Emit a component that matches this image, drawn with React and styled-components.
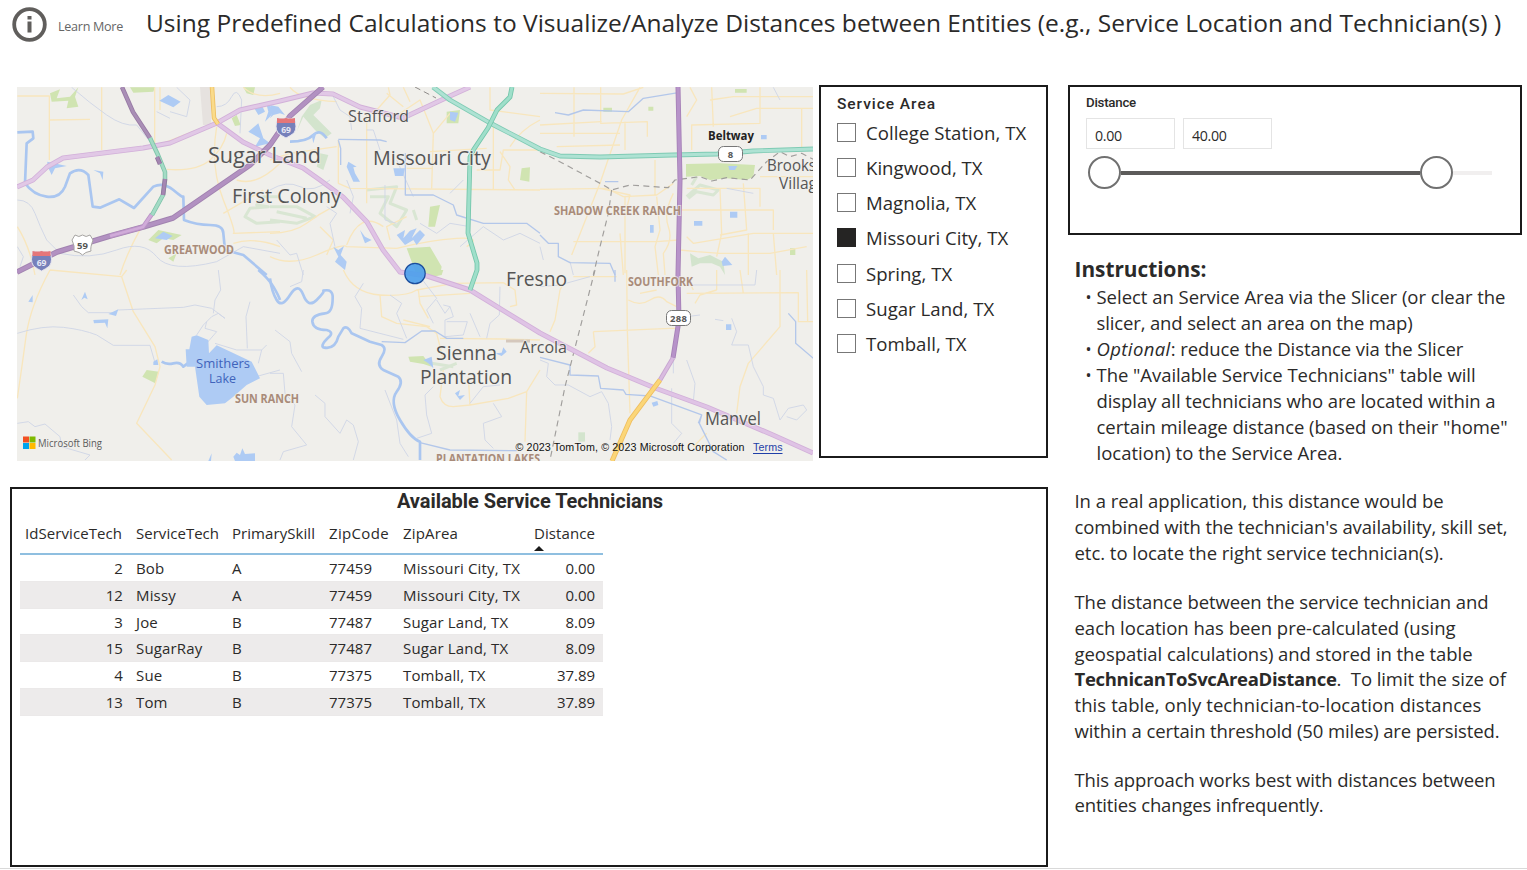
import React from "react";
import styled, { createGlobalStyle } from "styled-components";

const GlobalStyle = createGlobalStyle`
  *, *::before { box-sizing: border-box; }
  body {
    margin: 0;
    background: #fff;
    color: #2b2a29;
    font-family: "Open Sans", "Noto Sans", sans-serif;
    overflow: hidden;
  }
`;

const Page = styled.div`
  width: 1527px;
  height: 870px;
  overflow: hidden;
`;

const Report = styled.div`
  height: 869px;
  border-bottom: 1px solid #d9d9d9;
`;

const Header = styled.header`
  display: flex;
  height: 85px;
  padding-left: 12px;
`;

const InfoIcon = styled.svg`
  flex: none;
  width: 35px;
  height: 35px;
  margin-top: 7px;
`;

const LearnMore = styled.span`
  flex: none;
  width: 99px;
  padding: 7px 0 0 11px;
  font-size: 12.6px;
  line-height: 40px;
  letter-spacing: -0.29px;
  color: #666;
  white-space: nowrap;
`;

const Title = styled.h1`
  margin: 0;
  font-size: 24.5px;
  font-weight: 400;
  line-height: 45px;
  letter-spacing: 0.014px;
  white-space: nowrap;
`;

const Body = styled.main`
  display: grid;
  grid-template-columns: 1038px 454px;
  column-gap: 20px;
  padding-left: 10px;
`;

const TopRow = styled.div`
  display: flex;
  height: 402px;
`;

const MapFrame = styled.svg`
  display: block;
  width: 796px;
  height: 374px;
  margin: 2px 6px 0 7px;
`;

const Panel = styled.section`
  border: 2px solid #1b1b1b;
  background: #fff;
`;

const AreaPanel = styled(Panel)`
  width: 229px;
  height: 373px;
  padding: 7px 16px;
`;

const SlicerTitle = styled.div`
  font-family: Roboto, sans-serif;
  font-weight: 500;
  font-size: ${(p) => (p.$small ? "13.3px" : "15.5px")};
  letter-spacing: ${(p) => (p.$small ? "-0.25px" : "0.96px")};
  line-height: 21px;
`;

const Options = styled.div`
  margin-top: -0.6px;
`;

const Option = styled.label`
  display: flex;
  align-items: center;
  height: 35.25px;
  font-size: 18.6px;
  letter-spacing: 0.02px;
  white-space: nowrap;
`;

const Check = styled.span`
  width: 19px;
  height: 19px;
  margin-right: 10px;
  border: 1px solid ${(p) => (p.$on ? "#252423" : "#777")};
  background: ${(p) => (p.$on ? "#252423" : "#fff")};
`;

const TablePanel = styled(Panel)`
  height: 380px;
  padding: 0 8px;
`;

const TableTitle = styled.h2`
  margin: 0;
  padding-left: 2px;
  height: 26px;
  font: 700 20px/24px Roboto, sans-serif;
  letter-spacing: -0.04px;
  text-align: center;
`;

const Table = styled.div`
  width: 583px;
  font-size: 15px;
`;

const Row = styled.div`
  display: grid;
  grid-template-columns: 108px 96px 97px 74px 131px 77px;
  height: ${(p) => p.$h}px;
  line-height: 26px;
  background: ${(p) => (p.$shade ? "#edebeb" : "#fff")};
  border-bottom: 1px solid #ebe9e9;
`;

const HeadRow = styled(Row)`
  height: 40px;
  padding-top: 5px;
  border-bottom: 2px solid #8fbfe0;
`;

const Cell = styled.span`
  padding: 0 ${(p) => (p.$wide ? 8 : 5)}px 0 8px;
  text-align: ${(p) => (p.$right ? "right" : "left")};
  letter-spacing: ${(p) => p.$ls || 0.1}px;
  white-space: nowrap;
`;

const HeadCell = styled(Cell)`
  padding-left: 5px;
  padding-right: 6px;
  margin-left: ${(p) => (p.$right ? 0 : 3)}px;
`;

const SortMark = styled.span`
  display: block;
  width: 0;
  border: 5px solid transparent;
  border-top: 0;
  border-bottom-color: #1b1b1b;
`;

const DistancePanel = styled(Panel)`
  height: 150px;
  padding: 5px 16px;
`;

const Inputs = styled.div`
  display: flex;
  gap: 8px;
  margin-top: 5px;
`;

const NumberBox = styled.div`
  width: 89px;
  height: 31px;
  padding: 2px 0 0 8px;
  border: 1px solid #e4e4e4;
  font-size: 14.2px;
  line-height: 30px;
  letter-spacing: -0.35px;
`;

const Slider = styled.div`
  display: flex;
  align-items: center;
  margin: 7px 0 0 2px;
`;

const Handle = styled.span`
  width: 33px;
  height: 33px;
  border: 2px solid #707070;
  border-radius: 50%;
`;

const Track = styled.span`
  width: ${(p) => p.$w}px;
  height: 4px;
  background: ${(p) => (p.$active ? "#5c5b5a" : "#f1efef")};
`;

const Notes = styled.article`
  padding: 20px 0 0 6.5px;
  font-size: 18.5px;
`;

const NotesTitle = styled.h3`
  margin: 0;
  font-size: 20.8px;
  line-height: 29px;
`;

const Bullets = styled.ul`
  list-style: none;
  margin: 0;
  padding: 0;
`;

const Bullet = styled.li`
  display: flex;
  &::before {
    content: "•";
    flex: none;
    width: 22px;
    padding-left: 11px;
    font-size: 16px;
    line-height: 26px;
  }
`;

const Paragraph = styled.p`
  margin: ${(p) => p.$top}px 0 0;
`;

const Line = styled.span`
  display: block;
  line-height: ${(p) => p.$lh || 26}px;
  letter-spacing: ${(p) => p.$ls || 0}px;
  white-space: pre;
`;

const Strong = styled.b`
  letter-spacing: -0.306px;
`;

const Emphasis = styled.i`
  letter-spacing: 0.4px;
`;

const AREAS = ["College Station, TX", "Kingwood, TX", "Magnolia, TX", "Missouri City, TX", "Spring, TX", "Sugar Land, TX", "Tomball, TX"];

const TECHS = [
  [2, "Bob", "A", "77459", "Missouri City, TX", "0.00", 27],
  [12, "Missy", "A", "77459", "Missouri City, TX", "0.00", 27],
  [3, "Joe", "B", "77487", "Sugar Land, TX", "8.09", 26],
  [15, "SugarRay", "B", "77487", "Sugar Land, TX", "8.09", 27],
  [4, "Sue", "B", "77375", "Tomball, TX", "37.89", 27],
  [13, "Tom", "B", "77375", "Tomball, TX", "37.89", 27],
];

/* Local detail is drawn in 3x sheets: each sheet has its own origin on the map. */
const SHEETS = [
  {
    at: [10, 80],
    minor: "M22 48H118V240M118 120L240 118M275 22V210M434 22V200L560 150M22 440Q60 500 75 585M395 440Q350 520 330 585M620 140Q600 260 640 360T670 460L810 455M470 268Q560 275 600 240T650 160M680 300Q740 320 810 250M700 22Q740 60 810 40M670 490Q730 470 810 500M640 400L760 330M450 22V90M720 260L770 200",
    thin: "M185 22Q240 70 290 105T380 135L420 185M22 360Q60 360 75 400T110 480L150 520M150 520Q240 540 320 510T440 530T620 545L700 500L810 520M22 500L40 530L30 560M500 22L540 60L530 110L480 95M440 95L480 115M620 80Q650 80 665 50T695 60L690 160",
    river: "M22 157L68 155L70 175L50 190L45 310Q70 345 110 350T165 320L180 280Q210 258 235 285L248 380L270 383L328 358L372 384L430 320Q460 305 490 330T520 350L522 420Q560 435 600 435T640 460L645 510L700 525L770 585",
    water: "M448 62L475 45L512 65L490 82ZM112 245L170 258L135 265L125 285L112 258ZM250 270L280 275L278 300L270 280ZM730 80L755 75L765 95L745 105ZM770 75L800 85L780 110L765 125L775 95ZM715 155L745 130L760 175L780 190L735 200L750 175ZM435 475L460 455L488 468L470 480Z",
    park: "M360 22H435L430 35L370 38ZM665 115L680 105L692 135L675 138ZM120 40L150 28L140 55L180 50L205 22L195 50L205 80L170 85L175 62L125 65ZM700 22L735 22L730 45L710 40ZM415 480L445 450L515 465L490 480L460 475L440 490ZM475 535L500 520L490 545Z",
    golf: "M810 350L760 350L740 375L775 380L720 385L705 410L740 430L810 425",
  },
  {
    at: [270, 80],
    minor: "M205 180V310L240 325L810 330M290 100V370M0 460Q70 460 110 430T190 380M0 530Q60 560 140 525T230 500L380 505M380 505Q480 480 560 475T590 500M350 40L400 80M360 120L450 60L490 160L485 325M660 22V90L810 110M690 215L720 260L715 300L735 330M400 22L420 65M620 270H690L700 210L810 210M480 215L650 205M720 200Q750 150 810 120M410 265H485M230 495Q270 390 340 440M0 240L60 220L200 200M60 22Q90 60 200 65M355 22L360 45L320 90M150 440L190 480L170 525M410 410L350 440L360 480M540 100L490 160M670 130V330",
    thin: "M190 50L210 90L240 110L245 150M290 150H310L330 210M380 240L430 350M170 380L200 400L180 430L195 500M345 315V420L380 430M600 440L540 430L500 460L450 430M20 480L60 525L80 520L100 585M230 300L250 350L240 400M0 330Q50 300 90 320T180 300M570 500L640 440L700 480L750 460L810 490M580 300L540 340",
    river: "M60 185Q110 185 130 165T170 175",
    canal: "M60 185L100 180M205 178L330 180L350 185M205 180L212 205V255M406 220V345H490L550 375L560 405L640 430H770L810 460",
    water: "M0 75L25 80L45 105L30 100L10 105L0 115L8 95ZM540 95L565 98L555 125L540 120ZM370 265H405L400 288H375ZM235 245L260 260L250 262L255 280L270 305L250 305L230 260ZM270 450L285 470L305 480L285 490ZM380 465L405 450L400 475L420 452L440 445L425 475L450 450L465 465L440 495L430 480L405 495ZM190 500L205 510L222 498L212 525L230 545L225 570L195 545L205 530ZM125 165L140 155L130 190Z",
    park: "M530 95L570 90L565 130L530 130ZM480 380L510 375L495 440L475 440ZM755 265L780 262L778 305L750 300ZM410 505L480 500L515 560L510 585L440 585Z",
    green: "M120 75L155 60L150 85L130 105L185 160L165 175L135 150L100 110L80 155L95 110ZM150 220L175 225L160 270L140 260Z",
    golf: "M0 380H80L135 410L80 430L0 420M20 395L110 415M290 330L380 320L360 370L410 390L380 440L330 400L355 350L300 350M430 390L440 420",
  },
  {
    at: [540, 80],
    minor: "M0 40L250 42L310 22M102 22V170M182 22V130L322 125V170M0 135L185 125M300 22L245 120L180 310L95 525M255 125V210M50 200L240 195M0 328L200 325L250 350L350 345L400 310M345 240V345M255 350V580M425 390H700V450M440 470L460 490L640 460L820 460M515 22L520 140M455 210V135L660 130V22M570 110L650 85L820 85M510 60L580 50H820M785 85V210M625 460V585M610 310L620 450L540 465M440 325H660V380M660 290H820M100 485H350L415 480M350 350L360 450L345 500L355 585M540 325L545 460L530 530M700 460L710 585M420 510L470 515L540 520L690 520L800 500M400 340Q370 400 385 440T370 520L375 585M0 160H240M180 325L270 345L260 385M450 22L470 60L440 110M240 460L250 585",
    thin: "M560 325L640 340M0 500L10 540M90 545L100 585M700 22L720 60",
    canal: "M45 98L85 105L130 90L265 95L310 55L415 38M0 465L25 490H55V530L90 548L210 550L225 585M195 305H235",
    water: "M570 395H592V413H570ZM462 423H487V437H462ZM330 435H341V458H330ZM545 545L555 530L577 555L548 558ZM663 165H680V178H663ZM565 258H592L585 270H568Z",
    park: "M438 252L540 250L645 255L640 290L620 300L560 295L510 300L480 288L438 290ZM585 27H620V38H585ZM190 83H216V95H190ZM325 80H340V92H325ZM750 505H766V525H750Z",
    green: "M450 520L475 535L510 525L550 545L555 585L540 560L515 550L480 550L455 560Z",
    golf: "M440 350L480 315L535 330L520 345L470 335L445 355M470 290L455 315",
    border: "M0 215L65 248L195 318L215 330L270 315L385 323L405 300L480 290L515 303L560 293L630 300L680 245L720 215L750 230L785 220L820 238M215 330L205 400L180 500L160 585",
  },
  {
    at: [10, 270],
    minor: "M120 0L335 20L370 125L435 230L450 290L435 345L380 460L485 570M335 20L350 0M120 0Q60 110 48 200T22 385",
    thin: "M190 75L215 110L235 128H310L325 120L520 112L555 105L605 115L645 145L625 130L605 140L580 165L560 195M625 0L632 60L615 90L610 130M590 155L585 175L620 185L590 220M720 95L708 140L712 235M615 220L680 240L755 240L745 280M755 240L770 225M720 325L810 300M22 190Q100 165 160 172T260 195L310 226H420L437 285M22 460L55 455L75 470L105 462L150 500L155 530L240 555L225 570",
    river: "M745 0Q775 25 790 50T810 90M455 275Q470 285 490 280T520 290L540 275",
    water: "M545 200L560 196L595 210L597 250L620 226L725 275L750 325L710 345L670 380L645 400L590 405L568 380L555 290L530 290L527 238L538 238ZM250 150L295 148L292 175L285 158L252 160ZM295 132L325 118L318 138ZM55 95L68 75L68 97ZM214 90L225 65L233 88L223 83ZM430 275L442 268L445 285L430 285ZM670 560L680 548L690 555L697 535L705 552L735 550L735 573H675ZM595 573L605 550L603 573Z",
    park: "M397 320L410 300L447 305L436 340Z",
  },
  {
    at: [270, 270],
    minor: "M220 0Q250 70 330 75T440 60L550 40L700 38M330 75L335 140L380 160L470 170L500 190L520 270M445 60L450 100L475 145M510 205L700 207L810 210M400 150L480 170M700 38L735 60L740 105L720 110M520 300L510 380Q520 410 550 410L600 405L595 320M600 405L715 385L770 365L810 300M770 365L765 515M445 80L600 70",
    thin: "M100 0L95 35L60 50M280 40L255 80L275 115L270 175L400 208M360 75L395 100L380 130L410 205M450 20L500 85L470 120L490 160M500 90L525 130L540 110L520 105M540 110L550 140L525 150V200L580 195L592 155L530 155M690 50L688 135L660 160L650 205M15 180L60 215L65 250L95 305M0 310H40L45 370L75 405L65 470L110 525L40 545L30 570M135 375L165 400V440L210 490L230 450L250 465L265 515L250 570M345 360L380 450L390 520L415 560M490 350L465 375L470 435L485 490L440 505M600 400L640 350L690 345M670 400L695 440L640 460L645 510L670 535M600 130L630 200",
    river: "M0 25Q5 65 20 90T60 75T100 75T140 90T160 62Q190 55 188 85Q188 130 165 130Q125 135 127 155Q130 180 170 180Q190 185 180 198Q150 225 160 232Q195 240 205 200L220 175Q232 165 245 190L300 215L335 225Q352 235 335 260T340 300L385 320Q402 335 380 365T390 450T450 515L450 570",
    canal: "M335 215L405 218L455 183H495L530 205H580M450 518L540 540L740 542",
    water: "M460 270L485 260L490 295L475 280ZM555 370L570 360L565 378L585 375L570 390ZM700 232L710 245L695 258L675 250L695 248Z",
    park: "M415 260L460 258L485 290L460 282L420 275ZM470 0H520L515 15L490 20Z",
    golf: "M485 280L550 290M510 300L560 280",
  },
  {
    at: [540, 270],
    minor: "M260 0L262 180L270 430M160 185L390 175L420 175M160 185L165 230L145 250M60 60L75 30M60 60L45 150L30 185M265 90Q300 110 330 90T380 95L410 110M440 70L775 68V155H820M720 0L720 170L625 280L600 350L590 430M465 100L480 75L530 60M440 20L460 60M350 60L300 70M800 0L803 155M600 0L610 70M530 0V60M500 490L460 530M100 20H230",
    thin: "M440 270L465 340L460 395M575 145L590 185L575 225L625 225L640 290L670 350V375L700 385L720 450L745 415L790 405L800 420L770 450L740 440M0 270L25 280L20 320L45 345L85 345L150 380L185 365L205 400L215 470L210 510M395 355V460L425 490L400 520M0 50L60 45L150 20M440 140L480 135M525 148L550 152M445 45H645L650 0M400 310V270",
    canal: "M0 262L90 285V315L175 318L182 355L250 360L258 373L330 378L485 435L478 460L520 545L560 570M745 130L767 155V220L820 265M485 435L475 460M225 0V35",
    water: "M335 398L352 393L355 405L340 410ZM558 163H574V180H558Z",
    green: "M115 487H135V515H115Z",
    border: "M165 0L75 350L30 570",
  },
];

const ROADS = [
  { d: "M217 123L243 142L270 155L303 168L320 180L343 197L367 222L383 250L400 272L427 276L470 290L540 333L607 368L655 388L707 407L773 435L813 453", c: "#dfc3e5", e: "#d2b0d9", w: 5 },
  { d: "M17 187L33 180L47 167L63 158L143 148L170 143L217 123L240 110L280 101L313 93L333 94L360 107L403 118L450 96L470 87", c: "#e1c8e6", e: "#d2b0d9", w: 5 },
  { d: "M17 272L57 252L110 236L143 227L173 218L250 165L270 145L290 116L323 87", c: "#b291c1", e: "#a182b0", w: 5.5 },
  { d: "M110 236L143 227L152 214", c: "#d0abd9", e: "#bb94c7", w: 4.5 },
  { d: "M122 87L133 112L150 138", c: "#a98eb6", e: "#997ba5", w: 4.5 },
  { d: "M150 138L158 155L165 172V180L163 195L152 215", c: "#a3dbc5", e: "#7fc4aa", w: 4.5 },
  { d: "M157 157L160 164M165 179L163 195", c: "#a487b2", e: "#94749f", w: 4.5 },
  { d: "M433 87L450 100L490 123L540 149L560 156L600 157L673 155L717 154L753 151L813 149", c: "#aee2d3", e: "#7fcbb4", w: 4.8 },
  { d: "M512 87L510 97L497 110L488 128L474 149L470 157L468 233L477 263V270L470 290", c: "#9fdfca", e: "#74c6ab", w: 4.8 },
  { d: "M678 87L680 180L678 275L679 320L673 358", c: "#b793c9", e: "#a681b7", w: 5 },
  { d: "M673 358L660 380", c: "#d9bbe0", e: "#c6a5cf", w: 4.5 },
  { d: "M660 380L630 420L612 461", c: "#fbd678", e: "#efbd5d", w: 5 },
  { d: "M212 87L214 118L218 124", c: "#fadb8a", e: "#edbf62", w: 4.5 },
];

const TOWNS = [
  ["Sugar Land", 208, 163, 113, 21.5], ["Stafford", 348, 122, 61, 17], ["Missouri City", 373, 164.5, 118, 20],
  ["First Colony", 232, 203, 109, 20], ["Fresno", 506, 286, 61, 20], ["Sienna", 436, 360, 61, 20],
  ["Plantation", 420, 384, 92, 20], ["Arcola", 520, 352.5, 47, 16], ["Manvel", 705, 425, 56, 18],
  ["Brooks", 767, 171, 49, 16], ["Villag", 779, 189, 38, 16],
];

const DISTRICTS = [
  ["GREATWOOD", 164, 253.5, 70], ["SHADOW CREEK RANCH", 554, 214.5, 127], ["SOUTHFORK", 628, 286, 65],
  ["SUN RANCH", 235, 402.5, 64], ["PLANTATION LAKES", 436, 462.5, 104],
];

function Interstate({ x, y }) {
  return (
    <g transform={`translate(${x} ${y})`}>
      <path d="M-8 -9Q-4 -7 0 -9Q4 -7 8 -9Q12 0 8 6Q4 9 0 11Q-4 9 -8 6Q-12 0 -8 -9Z" fill="#7680ba" stroke="#e7e5ef" />
      <path d="M-9 -4V-9Q-4 -8 0 -9Q4 -8 9 -9V-4Z" fill="#e57679" />
      <text y="5.500" textAnchor="middle" fontSize="8.500" fontWeight="700" fill="#e6e8f5">69</text>
    </g>
  );
}

function Sheet({ s }) {
  return (
    <g transform={`translate(${s.at[0]} ${s.at[1]}) scale(.33333)`} fill="none" strokeLinejoin="round">
      {s.park && <path d={s.park} fill="#d0e4b1" />}
      {s.green && <path d={s.green} fill="#d3e4cd" />}
      {s.golf && <path d={s.golf} stroke="#d9e6d3" strokeWidth="9" />}
      <path d={s.minor} stroke="#f8e6bd" strokeWidth="4" />
      <path d={s.thin} stroke="#d0d6e6" strokeWidth="2.8" />
      {s.canal && <path d={s.canal} stroke="#b3c7ea" strokeWidth="4" />}
      {s.river && <path d={s.river} stroke="#aac6f0" strokeWidth="8" />}
      <path d={s.water} fill="#aecbf4" />
      {s.border && <path d={s.border} stroke="#a09e9c" strokeWidth="3.5" strokeDasharray="18 13" />}
    </g>
  );
}

function AreaMap() {
  return (
    <MapFrame viewBox="17 87 796 374" fontFamily="Open Sans, Noto Sans, sans-serif">
      <rect x="17" y="87" width="796" height="374" fill="#f0efeb" />
      <path d="M200 87H211V125H203Z" fill="#e6e2df" />
      {SHEETS.map((s, i) => <Sheet key={i} s={s} />)}
      {ROADS.map((r, i) => (
        <g key={i} fill="none" strokeLinejoin="round">
          <path d={r.d} stroke={r.e} strokeWidth={r.w} />
          <path d={r.d} stroke={r.c} strokeWidth={r.w - 1.7} />
        </g>
      ))}
      <path d="M415 87L436 98" stroke="#8f8c8a" strokeDasharray="6 4" />
      <path d="M506 341H530" stroke="#d5c8bd" strokeWidth="3" />
      <Interstate x={286} y={127} />
      <Interstate x={41.5} y={260} />
      <g stroke="#a7a5a3" fill="#fff">
        <path d="M75 235Q79 238 82.500 235Q86 238 90 235L93 240Q90 248 91 251Q85 252 82.500 255Q80 252 74 251Q75 246 72 240Z" />
        <rect x="718.500" y="146.500" width="24" height="15" rx="5" stroke="#777" />
        <rect x="666.500" y="310.500" width="24" height="15" rx="5" stroke="#777" />
      </g>
      <g textAnchor="middle" fontSize="9.500" fontWeight="700" fill="#555">
        <text x="82.500" y="248.500">59</text>
        <text x="730.500" y="157.500">8</text>
        <text x="678.500" y="321.500" textLength="17">288</text>
      </g>
      <g fill="#555" stroke="#f0efeb" strokeWidth="2" strokeOpacity=".7" paintOrder="stroke">
        {TOWNS.map(([t, x, y, w, size]) => (
          <text key={t} x={x} y={y} fontSize={size} textLength={w} lengthAdjust="spacingAndGlyphs">{t}</text>
        ))}
      </g>
      <g fill="#a98b79" fontSize="11.500" fontWeight="700" stroke="#f0efeb" strokeWidth="2" strokeOpacity=".7" paintOrder="stroke">
        {DISTRICTS.map(([t, x, y, w]) => (
          <text key={t} x={x} y={y} textLength={w} lengthAdjust="spacingAndGlyphs">{t}</text>
        ))}
      </g>
      <text x="708" y="140" fontSize="13" fontWeight="700" fill="#222" textLength="46" lengthAdjust="spacingAndGlyphs">Beltway</text>
      <g fill="#4063bb" fontSize="13.500">
        <text x="196" y="368" textLength="54" lengthAdjust="spacingAndGlyphs">Smithers</text>
        <text x="209" y="382.500" textLength="27" lengthAdjust="spacingAndGlyphs">Lake</text>
      </g>
      <circle cx="415" cy="273.500" r="10.200" fill="#4d9fec" fillOpacity=".92" stroke="#1a4c9c" strokeWidth="1.200" />
      <rect x="23" y="436.500" width="6" height="6" fill="#f25022" />
      <rect x="29.500" y="436.500" width="6" height="6" fill="#7fba00" />
      <rect x="23" y="443" width="6" height="6" fill="#00a4ef" />
      <rect x="29.500" y="443" width="6" height="6" fill="#ffb900" />
      <text x="38" y="447" fontSize="11" fill="#5b5b5b" textLength="64" lengthAdjust="spacingAndGlyphs">Microsoft Bing</text>
      <g fontFamily="Liberation Sans, sans-serif" fontSize="10.700">
        <text x="515.500" y="451" fill="#111" textLength="229">© 2023 TomTom, © 2023 Microsoft Corporation</text>
        <text x="753" y="451" fill="#1f3fa8" textLength="29.500">Terms</text>
        <path d="M753 453.500H782.500" stroke="#1f3fa8" />
      </g>
    </MapFrame>
  );
}

function Technicians() {
  return (
    <TablePanel>
      <TableTitle>Available Service Technicians</TableTitle>
      <Table>
        <HeadRow>
          <HeadCell $right $ls={0.07}>IdServiceTech</HeadCell>
          <HeadCell $ls={0.03}>ServiceTech</HeadCell>
          <HeadCell $ls={0.06}>PrimarySkill</HeadCell>
          <HeadCell $ls={0.34}>ZipCode</HeadCell>
          <HeadCell $ls={0.15}>ZipArea</HeadCell>
          <HeadCell $ls={0.09}>Distance<SortMark /></HeadCell>
        </HeadRow>
        {TECHS.map(([id, name, skill, zip, area, distance, h], i) => (
          <Row key={id} $h={h} $shade={i % 2 === 1}>
            <Cell $right>{id}</Cell>
            <Cell $ls={0.15}>{name}</Cell>
            <Cell>{skill}</Cell>
            <Cell $ls={0.02}>{zip}</Cell>
            <Cell $ls={0.15}>{area}</Cell>
            <Cell $right $wide $ls={-0.04}>{distance}</Cell>
          </Row>
        ))}
      </Table>
    </TablePanel>
  );
}

function Instructions() {
  return (
    <Notes>
      <NotesTitle>Instructions:</NotesTitle>
      <Bullets>
        <Bullet>
          <div>
            <Line $ls={-0.023}>Select an Service Area via the Slicer (or clear the</Line>
            <Line $ls={-0.136}>slicer, and select an area on the map)</Line>
          </div>
        </Bullet>
        <Bullet>
          <Line $ls={-0.071}><Emphasis>Optional</Emphasis>: reduce the Distance via the Slicer</Line>
        </Bullet>
        <Bullet>
          <div>
            <Line $ls={-0.055}>The "Available Service Technicians" table will</Line>
            <Line $ls={-0.069}>display all technicians who are located within a</Line>
            <Line $ls={-0.058}>certain mileage distance (based on their "home"</Line>
            <Line $ls={0.018}>location) to the Service Area.</Line>
          </div>
        </Bullet>
      </Bullets>
      <Paragraph $top={22}>
        <Line $ls={-0.055}>In a real application, this distance would be</Line>
        <Line $ls={-0.128}>combined with the technician's availability, skill set,</Line>
        <Line $ls={-0.034}>etc. to locate the right service technician(s).</Line>
      </Paragraph>
      <Paragraph $top={23}>
        <Line $lh={25.8} $ls={-0.071}>The distance between the service technician and</Line>
        <Line $lh={25.8} $ls={-0.014}>each location has been pre-calculated (using</Line>
        <Line $lh={25.8} $ls={-0.049}>geospatial calculations) and stored in the table</Line>
        <Line $lh={25.8} $ls={-0.075}><Strong>TechnicanToSvcAreaDistance</Strong>.{"  "}To limit the size of</Line>
        <Line $lh={25.8} $ls={0.084}>this table, only technician-to-location distances</Line>
        <Line $lh={25.8} $ls={-0.105}>within a certain threshold (50 miles) are persisted.</Line>
      </Paragraph>
      <Paragraph $top={23}>
        <Line $lh={25.4} $ls={-0.137}>This approach works best with distances between</Line>
        <Line $lh={25.4} $ls={-0.171}>entities changes infrequently.</Line>
      </Paragraph>
    </Notes>
  );
}

export default function App() {
  return (
    <Page>
      <GlobalStyle />
      <Report>
        <Header>
          <InfoIcon viewBox="0 0 35 35">
            <circle cx="17.500" cy="17.500" r="15.300" fill="none" stroke="#605e5c" strokeWidth="3.800" />
            <path d="M15.500 9H19.500V12.500H15.500ZM15.500 14.500H19.500V25.500H15.500Z" fill="#605e5c" />
          </InfoIcon>
          <LearnMore>Learn More</LearnMore>
          <Title>Using Predefined Calculations to Visualize/Analyze Distances between Entities (e.g., Service Location and Technician(s) )</Title>
        </Header>
        <Body>
          <div>
            <TopRow>
              <AreaMap />
              <AreaPanel>
                <SlicerTitle>Service Area</SlicerTitle>
                <Options>
                  {AREAS.map((a) => (
                    <Option key={a}><Check $on={a === "Missouri City, TX"} />{a}</Option>
                  ))}
                </Options>
              </AreaPanel>
            </TopRow>
            <Technicians />
          </div>
          <div>
            <DistancePanel>
              <SlicerTitle $small>Distance</SlicerTitle>
              <Inputs>
                <NumberBox>0.00</NumberBox>
                <NumberBox>40.00</NumberBox>
              </Inputs>
              <Slider>
                <Handle />
                <Track $w={299} $active />
                <Handle />
                <Track $w={39} />
              </Slider>
            </DistancePanel>
            <Instructions />
          </div>
        </Body>
      </Report>
    </Page>
  );
}
